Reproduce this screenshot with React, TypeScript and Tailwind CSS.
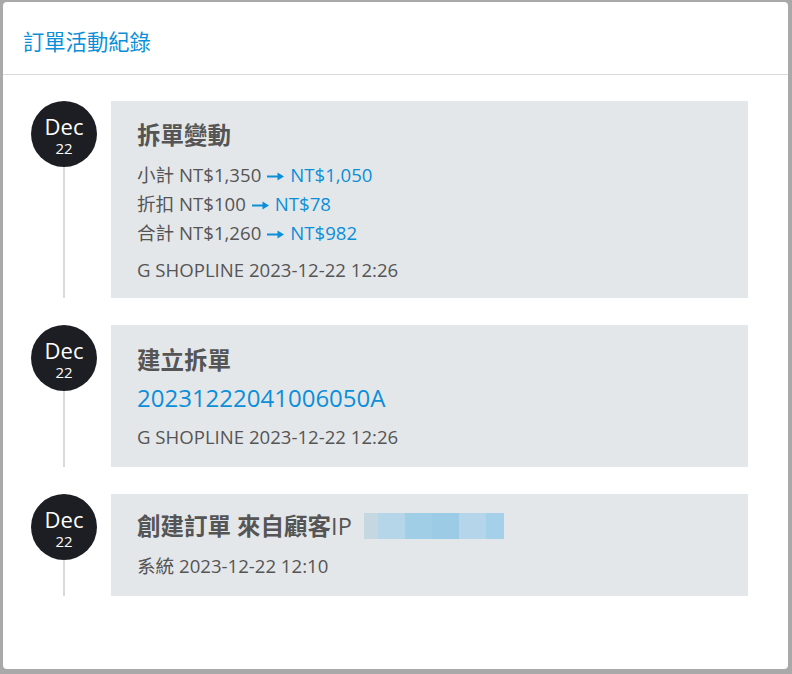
import React from 'react'

const font = "font-['Open_Sans','Noto_Sans_CJK_TC',sans-serif]"

function Arrow() {
  return (
    <svg className="inline-block mx-[6px] align-middle -mt-[2px]" width="17" height="9" viewBox="0 0 17 9" fill="#0b8fd9">
      <rect x="0" y="3.5" width="12" height="2" />
      <polygon points="10.5,0.5 17,4.5 10.5,8.5" />
    </svg>
  )
}

function DateBadge() {
  return (
    <div className="w-[66px] flex flex-col items-center shrink-0">
      <div className="w-[66px] h-[66px] rounded-full bg-[#1c1e23] text-white flex flex-col items-center justify-center">
        <span className="text-[22px] leading-[28px]">Dec</span>
        <span className="text-[15px] leading-[17px]">22</span>
      </div>
      <div className="w-[2px] flex-1 bg-[#d9d9d9]" />
    </div>
  )
}

function ChangeLine({ label, from, to }: { label: string; from: string; to: string }) {
  return (
    <div className="leading-[29px] text-[18.6px] text-[#555]">
      {label} {from}
      <Arrow />
      <span className="text-[#0b8fd9]">{to}</span>
    </div>
  )
}

export default function App() {
  return (
    <div className={`h-[674px] bg-[#a9a9a9] pt-[2px] pl-[3px] pr-[4px] pb-[5px] ${font}`}>
      <div className="h-full bg-white rounded-[4px] flex flex-col">
        <div className="h-[73px] border-b border-[#dcdcdc] pl-[20px] pt-[25px] shrink-0">
          <h1 className="text-[21.3px] leading-[30px] text-[#0b8fd9]">訂單活動紀錄</h1>
        </div>

        <div className="pt-[26px] pl-[28px] pr-[40px] flex flex-col">
          {/* 拆單變動 */}
          <div className="flex gap-[14px] pb-[27px]">
            <DateBadge />
            <div className="flex-1 bg-[#e4e7ea] px-[26px] pt-[19px] pb-[16px]">
              <div className="text-[23.5px] leading-[30px] font-semibold text-[#555]">拆單變動</div>
              <div className="mt-[10px]">
                <ChangeLine label="小計" from="NT$1,350" to="NT$1,050" />
                <ChangeLine label="折扣" from="NT$100" to="NT$78" />
                <ChangeLine label="合計" from="NT$1,260" to="NT$982" />
              </div>
              <div className="mt-[11px] text-[18.6px] leading-[24px] text-[#555]">G SHOPLINE 2023-12-22 12:26</div>
            </div>
          </div>

          {/* 建立拆單 */}
          <div className="flex gap-[14px] pb-[27px]">
            <DateBadge />
            <div className="flex-1 bg-[#e4e7ea] px-[26px] pt-[20px] pb-[18px]">
              <div className="text-[23.5px] leading-[30px] font-semibold text-[#555]">建立拆單</div>
              <div className="mt-[7px] text-[24px] leading-[32px] text-[#0b8fd9]">20231222041006050A</div>
              <div className="mt-[11px] text-[18.6px] leading-[24px] text-[#555]">G SHOPLINE 2023-12-22 12:26</div>
            </div>
          </div>

          {/* 創建訂單 */}
          <div className="flex gap-[14px]">
            <DateBadge />
            <div className="flex-1 bg-[#e4e7ea] px-[26px] pt-[17px] pb-[18px]">
              <div className="flex items-center text-[23.5px] leading-[30px] text-[#555]">
                <span className="font-semibold">創建訂單 來自顧客</span>
                <span>IP</span>
                <span className="ml-[12px] flex h-[26px]">
                  <span className="w-[14px] bg-[#c5d7e1]" />
                  <span className="w-[27px] bg-[#b5d6e9]" />
                  <span className="w-[27px] bg-[#9fcee6]" />
                  <span className="w-[27px] bg-[#9bcbe5]" />
                  <span className="w-[27px] bg-[#b5d6ea]" />
                  <span className="w-[18px] bg-[#a4d1e9]" />
                </span>
              </div>
              <div className="mt-[13px] text-[18.6px] leading-[24px] text-[#555]">系統 2023-12-22 12:10</div>
            </div>
          </div>
        </div>
      </div>
    </div>
  )
}
